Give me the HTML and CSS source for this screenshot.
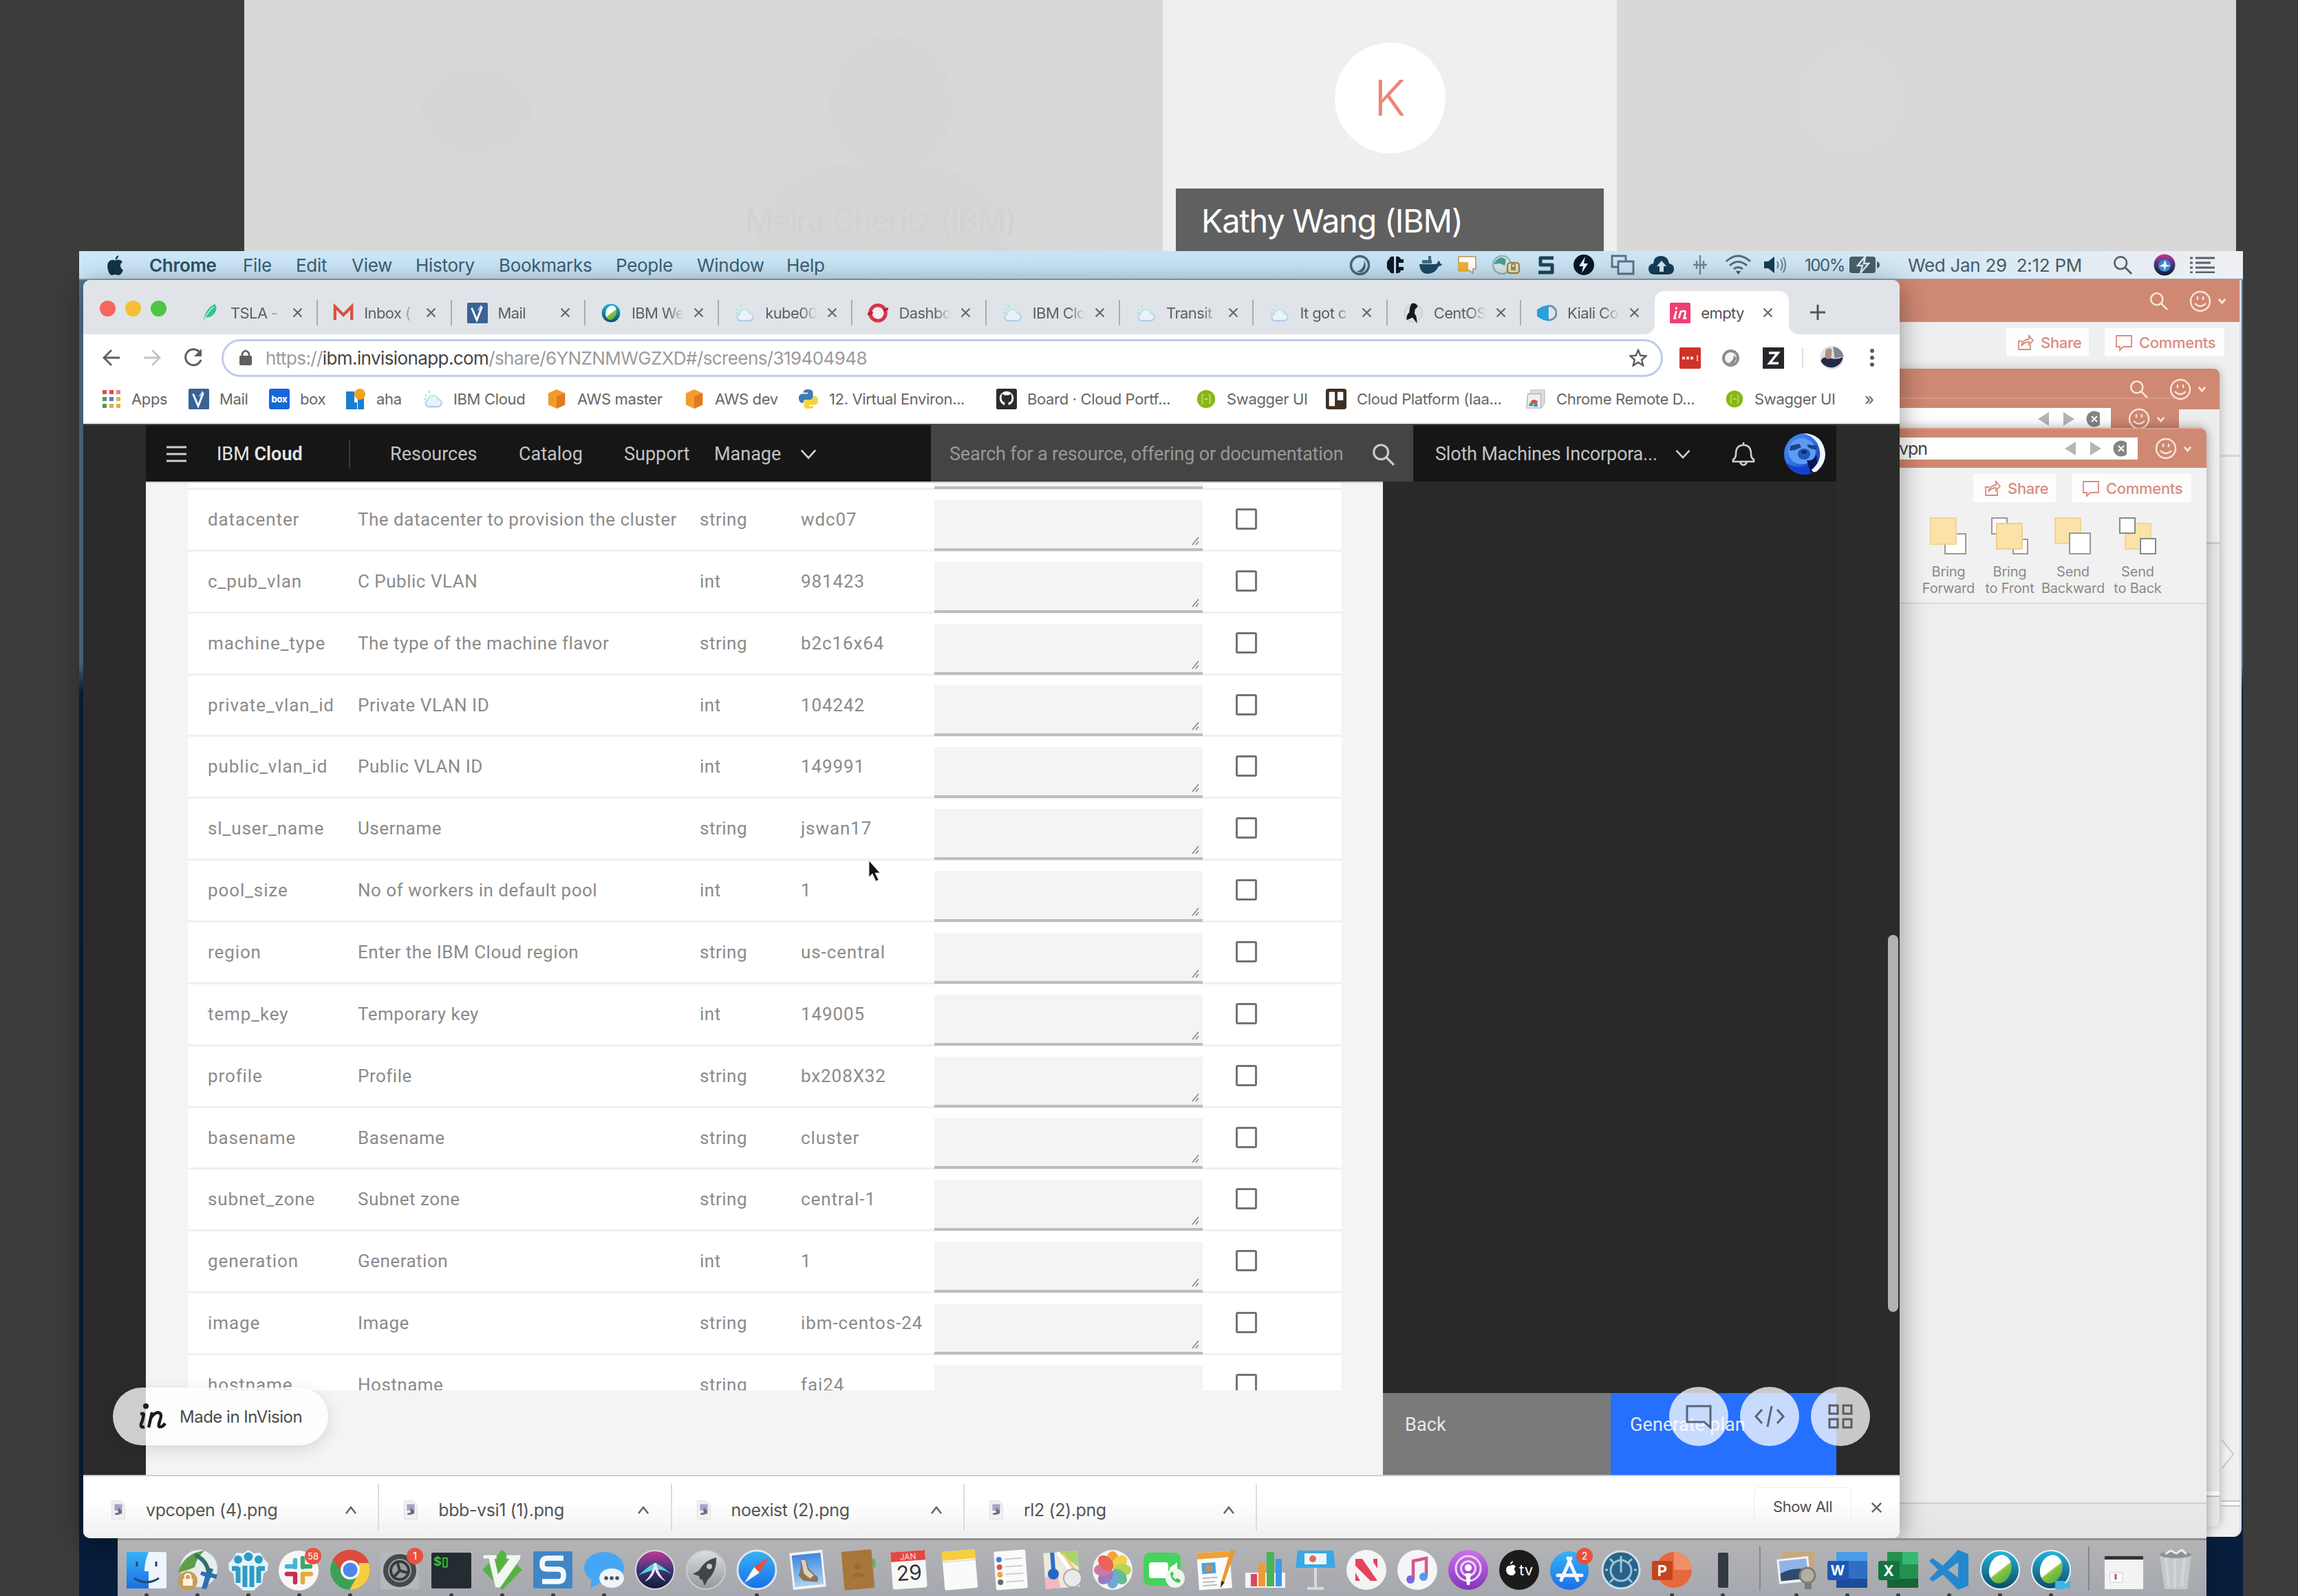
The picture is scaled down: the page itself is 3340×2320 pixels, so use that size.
FILE: index.html
```html
<!DOCTYPE html>
<html lang="en">
<head>
<meta charset="utf-8">
<title>Shared screen</title>
<link rel="stylesheet" href="styles.css">
</head>
<body>
<svg width="0" height="0" class="defs">
  <defs>
    <linearGradient id="gBlue" x1="0" y1="0" x2="0" y2="1"><stop offset="0" stop-color="#37b2f5"/><stop offset="1" stop-color="#1b6fe8"/></linearGradient>
    <linearGradient id="gSilver" x1="0" y1="0" x2="0" y2="1"><stop offset="0" stop-color="#dcdee0"/><stop offset="1" stop-color="#94979b"/></linearGradient>
    <linearGradient id="gCloud" x1="0" y1="0" x2="0" y2="1"><stop offset="0" stop-color="#bfeadf"/><stop offset="1" stop-color="#b2cdf3"/></linearGradient>
    <linearGradient id="gTeal" x1="0" y1="0" x2="0" y2="1"><stop offset="0" stop-color="#25b6dc"/><stop offset="1" stop-color="#0c4a66"/></linearGradient>
    <linearGradient id="gPod" x1="0" y1="0" x2="0" y2="1"><stop offset="0" stop-color="#cb72ea"/><stop offset="1" stop-color="#8431bd"/></linearGradient>
    <linearGradient id="gSiri" x1="0" y1="0" x2="0" y2="1"><stop offset="0" stop-color="#c23b93"/><stop offset=".5" stop-color="#3f3577"/><stop offset="1" stop-color="#101a33"/></linearGradient>
    <linearGradient id="gSky" x1="0" y1="0" x2="0" y2="1"><stop offset="0" stop-color="#3f86e0"/><stop offset="1" stop-color="#a9d3f2"/></linearGradient>
    <linearGradient id="gGreen" x1="0" y1="0" x2="1" y2="1"><stop offset="0" stop-color="#fff"/><stop offset=".5" stop-color="#fff"/><stop offset=".55" stop-color="#8cc63f"/><stop offset="1" stop-color="#3fa34d"/></linearGradient>
    <linearGradient id="gSloth" x1="0" y1="0" x2="1" y2="1"><stop offset="0" stop-color="#4f8ff5"/><stop offset=".5" stop-color="#2c6be6"/><stop offset="1" stop-color="#0a1c78"/></linearGradient>
  </defs>
  <symbol id="x" viewBox="0 0 20 20"><path d="M3 3l14 14M17 3L3 17" fill="none" stroke="currentColor" stroke-width="2.6"/></symbol>
  <symbol id="chev" viewBox="0 0 30 30"><path d="M4 9l11 12L26 9" fill="none" stroke="currentColor" stroke-width="3"/></symbol>
  <symbol id="chevb" viewBox="0 0 14 14"><path d="M2 4l5 6 5-6" fill="none" stroke="currentColor" stroke-width="3"/></symbol>
  <symbol id="mag" viewBox="0 0 30 30"><circle cx="12" cy="12" r="9.5" fill="none" stroke="currentColor" stroke-width="2.8"/><path d="M19 19l10 10" stroke="currentColor" stroke-width="3"/></symbol>
  <symbol id="smile" viewBox="0 0 32 32"><circle cx="16" cy="16" r="14" fill="none" stroke="currentColor" stroke-width="2.4"/><path d="M12 9v5M20 9v5M8 19q8 8 16 0" fill="none" stroke="currentColor" stroke-width="2.4"/></symbol>
  <symbol id="cloud" viewBox="0 0 32 32"><path d="M9 28h14a6 6 0 0 0 1-12 8 8 0 0 0-15.500 1.500A5.500 5.500 0 0 0 9 28z" fill="#e9f2fa" stroke="url(#gCloud)" stroke-width="2.600"/><path d="M4 9l3 3M10 3l1 4M2 16h4" stroke="#a5e6dd" stroke-width="2"/></symbol>
  <symbol id="vmail" viewBox="0 0 32 32"><rect width="32" height="32" rx="2" fill="#3b6295"/><path d="M7 8l8 19L23 6" fill="none" stroke="#fff" stroke-width="3"/><path d="M17 12l5-8" stroke="#bcd" stroke-width="2"/></symbol>
  <symbol id="webex" viewBox="0 0 60 60"><circle cx="30" cy="30" r="28" fill="url(#gTeal)" stroke="#e7f4f8" stroke-width="2"/><ellipse cx="30" cy="29" rx="16" ry="21" fill="url(#gGreen)" transform="rotate(15 30 30)"/></symbol>
  <symbol id="cube" viewBox="0 0 32 32"><path d="M16 1l13 6v18l-13 6-13-6V7z" fill="#f59a2c"/><path d="M16 12l13-5v18l-13 6z" fill="#e07a1d"/></symbol>
  <symbol id="swag" viewBox="0 0 32 32"><circle cx="16" cy="16" r="14" fill="#86b812"/><path d="M12 9q-3 0-2 7-1 7 2 7M20 9q3 0 2 7 1 7-2 7M13 16h6" fill="none" stroke="#bcd96c" stroke-width="2"/></symbol>
  <symbol id="share" viewBox="0 0 26 26"><path d="M8 11H3v12h17v-7M7 18q1-9 11-10V3l6 7-6 6v-4q-7 0-11 6z" fill="none" stroke="currentColor" stroke-width="1.800"/></symbol>
  <symbol id="note" viewBox="0 0 26 26"><path d="M2 3h22v16H12l-5 5v-5H2z" fill="none" stroke="currentColor" stroke-width="1.800"/></symbol>
  <symbol id="grip" viewBox="0 0 14 14"><path d="M3 13L12 2M8 13l4-5" stroke="#8c8c8c" stroke-width="1.800"/></symbol>
  <symbol id="png" viewBox="0 0 22 30"><path d="M1 1h14l6 7v21H1z" fill="#f1f1f3" stroke="#d9d9dc"/><rect x="5" y="6" width="12" height="10" fill="#a3a4c8"/><path d="M6 21h5M12 12v10M15 15v6" stroke="#6a6c80" stroke-width="3"/></symbol>
  <symbol id="up" viewBox="0 0 18 14"><path d="M2 12l7-9 7 9" fill="none" stroke="#666" stroke-width="2.600"/></symbol>
</svg>
<main class="stage">

  <section class="tiles">
    <div class="tile tile-a"><span class="ghost ghost-1"></span><span class="ghost ghost-2"></span><span class="ghost ghost-4"></span><div class="ghost-name">Meira Cheritz (IBM)</div></div>
    <div class="tile tile-k"><div class="avatar">K</div><div class="name">Kathy Wang (IBM)</div></div>
    <div class="tile tile-b"><span class="ghost ghost-3"></span></div>
  </section>

  <section class="wall"></section>

  <header class="menubar">
    <nav class="menus">
      <svg viewBox="0 0 26 32" width="25" height="31"><path d="M18 1q0 5-5 7Q13 3 18 1zM13 9q3-2 6-1 3 0 5 3-4 3-3 7 1 4 4 5-3 8-7 8l-5-1-5 1Q4 31 2 23 0 15 3 11q4-5 10-2z" fill="#123449"/></svg>
      <b>Chrome</b><span>File</span><span>Edit</span><span>View</span><span>History</span><span>Bookmarks</span><span>People</span><span>Window</span><span>Help</span>
    </nav>
    <div class="status">
      <svg width="31" height="31" viewBox="0 0 31 31"><circle cx="15.500" cy="15.500" r="13" fill="none" stroke="#476878" stroke-width="3.500"/><path d="M10 25q12-3 12-17 5 13-4 18z" fill="#476878"/></svg>
      <svg width="25" height="28" viewBox="0 0 25 28"><path d="M11 2v24Q5 27 4 22 0 20 1 14 0 8 4 6 5 1 11 2zM14 2q6-1 7 4h4v5h-7v6h7v5h-4q-1 5-7 4z" fill="#0c1a26"/></svg>
      <svg width="34" height="30" viewBox="0 0 34 30"><path d="M1 14h24q3-1 3-5 4 1 3 4l3 1q-1 3-5 3-5 11-16 11Q2 28 1 14z" fill="#1d4a63"/><path d="M5 8h14v5H5zM14 2h4v6h-4z" fill="#3f6d84"/></svg>
      <svg width="30" height="30" viewBox="0 0 30 30"><path d="M2 3h25v18h-4v6l-6-4H2z" fill="#fff" stroke="#c9a77a" stroke-width="2"/><path d="M2 11h14v14H2z" fill="#efb634"/></svg>
      <svg width="43" height="31" viewBox="0 0 43 31"><circle cx="15" cy="15" r="13" fill="#d4e9e6" stroke="#8fb9b9" stroke-width="2.500"/><path d="M4 12q9-13 17-4l-2 8-7-3-8 1z" fill="#4f9b94"/><rect x="23" y="12" width="17" height="15" rx="4" fill="#ece3c0" stroke="#a08c56" stroke-width="2.500"/><path d="M28 18h7v5h-7z" fill="#a08c56"/><path d="M29 18v-3q3-3 5 0v3" fill="none" stroke="#a08c56" stroke-width="2"/></svg>
      <svg width="25" height="28" viewBox="0 0 25 28"><path d="M23 4H4v10h17v11H1" fill="none" stroke="#1d4658" stroke-width="5" stroke-linejoin="round"/></svg>
      <svg width="32" height="32" viewBox="0 0 32 32"><circle cx="16" cy="16" r="15" fill="#08172b"/><path d="M18 4L9 18h6l-2 10 9-14h-6z" fill="#eef7fc"/></svg>
      <svg width="35" height="30" viewBox="0 0 35 30"><path d="M10 18H2V2h20v7M11 10h22v18H11z" fill="none" stroke="#537487" stroke-width="2.800"/></svg>
      <svg width="39" height="29" viewBox="0 0 39 29"><path d="M9 28q-8-1-8-8t7-8Q9 1 19 1t12 11q7 1 7 8t-8 8z" fill="#163f57"/><path d="M20 8l7 8h-4v8h-6v-8h-4z" fill="#cfe9f7"/></svg>
      <svg width="22" height="30" viewBox="0 0 22 30"><path d="M11 1v28M6 9v12M16 9v12M1 15h20" stroke="#6c8796" stroke-width="2.400"/></svg>
      <svg width="39" height="30" viewBox="0 0 39 30"><path d="M2 10Q19-6 37 10M7 16q12-11 25 0M13 21q6-5 13 0" fill="none" stroke="#4f7080" stroke-width="3"/><path d="M16 24h7l-3.500 5z" fill="#35566a"/></svg>
      <svg width="34" height="26" viewBox="0 0 34 26"><path d="M1 8h6l9-7v24l-9-7H1z" fill="#173d52"/><path d="M20 8q3 5 0 10M25 5q5 8 0 16M29 2q6 11 0 22" fill="none" stroke="#6c8b9a" stroke-width="2.200"/></svg>
      <span class="pct">100%</span>
      <svg width="45" height="26" viewBox="0 0 45 26"><rect x="1" y="1" width="38" height="24" rx="4" fill="#47606c"/><path d="M41 8v10q4-1 4-5t-4-5z" fill="#47606c"/><path d="M24 1L13 14h7l-3 11 12-14h-7z" fill="#47606c" stroke="#d8ebf4" stroke-width="2.500"/></svg>
      <span class="clock">Wed Jan 29&nbsp; 2:12 PM</span>
      <svg class="grey" width="28" height="28"><use href="#mag"/></svg>
      <svg width="32" height="32" viewBox="0 0 32 32"><circle cx="16" cy="16" r="15.500" fill="url(#gSiri)"/><circle cx="16" cy="17" r="9" fill="#3b86cf"/><path d="M17 9l2 7 6 1-7 2-2 6-1-6-7-1 6-3z" fill="#e8f6fb"/></svg>
      <svg width="36" height="24" viewBox="0 0 36 24"><path d="M0 2h4M0 9h4M0 16h4M0 23h4M8 2h28M8 9h22M8 16h28M8 23h28" stroke="#54606a" stroke-width="3"/></svg>
    </div>
  </header>

  <section class="ppt ppt-1">
    <div class="ppt-bar"><svg width="27" height="27"><use href="#mag"/></svg><svg width="32" height="32"><use href="#smile"/></svg><svg width="13" height="13"><use href="#chevb"/></svg></div>
    <div class="ppt-tabs"><span class="pill"><svg width="26" height="26"><use href="#share"/></svg>Share</span><span class="pill pill-c"><svg width="26" height="26"><use href="#note"/></svg>Comments</span></div>
    <div class="ppt-edge"></div><div class="ppt-foot"></div>
    <svg class="peek" width="20" height="44" viewBox="0 0 20 44"><path d="M1 1l17 21L1 43" fill="#f3f3f3" stroke="#ccc" stroke-width="2"/></svg>
  </section>
  <section class="ppt ppt-2">
    <div class="ppt-bar"><svg width="27" height="27"><use href="#mag"/></svg><svg width="32" height="32"><use href="#smile"/></svg><svg width="13" height="13"><use href="#chevb"/></svg></div>
    <div class="ppt-edge"></div><div class="ppt-foot"></div>
  </section>
  <section class="ppt ppt-3">
    <div class="ppt-bar"><div class="find"><svg width="90" height="24" viewBox="0 0 90 24"><path d="M16 2v20L0 12zM37 2v20l16-10z" fill="#b5b5b5"/><circle cx="82" cy="12" r="11.500" fill="#858585"/><path d="M78 8l8 8M86 8l-8 8" stroke="#fff" stroke-width="2"/></svg></div><svg width="32" height="32"><use href="#smile"/></svg><svg width="13" height="13"><use href="#chevb"/></svg></div>
  </section>
  <section class="ppt ppt-4">
    <div class="ppt-bar"><div class="find"><span>vpn</span><svg width="90" height="24" viewBox="0 0 90 24"><path d="M16 2v20L0 12zM37 2v20l16-10z" fill="#b5b5b5"/><circle cx="82" cy="12" r="11.500" fill="#858585"/><path d="M78 8l8 8M86 8l-8 8" stroke="#fff" stroke-width="2"/></svg></div><svg width="32" height="32"><use href="#smile"/></svg><svg width="13" height="13"><use href="#chevb"/></svg></div>
    <div class="ppt-tabs"><span class="pill"><svg width="26" height="26"><use href="#share"/></svg>Share</span><span class="pill pill-c"><svg width="26" height="26"><use href="#note"/></svg>Comments</span></div>
    <div class="arrange">
      <div><svg width="54" height="56" viewBox="0 0 54 56"><path d="M22 24h30v29H22z" fill="#fff" stroke="#999" stroke-width="2"/><path d="M1 1h37v38H1z" fill="#fae2a8" stroke="#f0d49a" stroke-width="2"/></svg>Bring<br>Forward</div>
      <div><svg width="54" height="56" viewBox="0 0 54 56"><path d="M1 1h22v23H1zM32 32h21v21H32z" fill="#fff" stroke="#999" stroke-width="2"/><path d="M8 9h37v37H8z" fill="#fae2a8" stroke="#f0cf8c" stroke-width="2"/></svg>Bring<br>to Front</div>
      <div><svg width="54" height="56" viewBox="0 0 54 56"><path d="M1 1h37v37H1z" fill="#fae2a8" stroke="#f0d49a" stroke-width="2"/><path d="M22 23h30v30H22z" fill="#fff" stroke="#999" stroke-width="2"/></svg>Send<br>Backward</div>
      <div><svg width="54" height="56" viewBox="0 0 54 56"><path d="M9 9h37v37H9z" fill="#fae2a8" stroke="#f0d49a" stroke-width="2"/><path d="M1 1h22v22H1zM31 31h22v22H31z" fill="#fff" stroke="#888" stroke-width="2"/></svg>Send<br>to Back</div>
    </div>
    <div class="canvas"></div>
    <div class="ppt-bottom"></div>
  </section>

  <section class="chrome">
    <div class="tabs">
      <div class="lights"><i class="r"></i><i class="y"></i><i class="g"></i></div>
      <div class="tab"><svg width="30" height="32" viewBox="0 0 32 32"><path d="M5 31Q9 8 24 2q5 8-2 16-5 5-12 5z" fill="#2fc48e"/><path d="M5 31Q12 14 22 6" stroke="#bfeedd" stroke-width="1.500" fill="none"/></svg><span>TSLA -</span><svg class="cl" width="17" height="17"><use href="#x"/></svg></div>
      <div class="tab"><svg width="30" height="32" viewBox="0 0 32 32"><path d="M3 27V6l13 13L29 6v21" fill="none" stroke="#d8503f" stroke-width="4.500"/></svg><span>Inbox (</span><svg class="cl" width="17" height="17"><use href="#x"/></svg></div>
      <div class="tab"><svg width="30" height="32"><use href="#vmail"/></svg><span>Mail</span><svg class="cl" width="17" height="17"><use href="#x"/></svg></div>
      <div class="tab"><svg width="30" height="32"><use href="#webex"/></svg><span>IBM We</span><svg class="cl" width="17" height="17"><use href="#x"/></svg></div>
      <div class="tab"><svg width="30" height="32"><use href="#cloud"/></svg><span>kube00</span><svg class="cl" width="17" height="17"><use href="#x"/></svg></div>
      <div class="tab"><svg width="30" height="32" viewBox="0 0 32 32"><circle cx="16" cy="16" r="12" fill="#f8eef0" stroke="#d63447" stroke-width="5.500"/><path d="M0 18l8-3M24 12l8-3" stroke="#b92335" stroke-width="4"/></svg><span>Dashbo</span><svg class="cl" width="17" height="17"><use href="#x"/></svg></div>
      <div class="tab"><svg width="30" height="32"><use href="#cloud"/></svg><span>IBM Clo</span><svg class="cl" width="17" height="17"><use href="#x"/></svg></div>
      <div class="tab"><svg width="30" height="32"><use href="#cloud"/></svg><span>Transit</span><svg class="cl" width="17" height="17"><use href="#x"/></svg></div>
      <div class="tab"><svg width="30" height="32"><use href="#cloud"/></svg><span>It got c</span><svg class="cl" width="17" height="17"><use href="#x"/></svg></div>
      <div class="tab"><svg width="30" height="32" viewBox="0 0 32 32"><circle cx="16" cy="16" r="14" fill="#dde0e2" stroke="#b8bcbf"/><path d="M14 1q7-1 9 5l-4 4-1 6 3 6 1 10-7-9-9 4q-1-8 4-12 0-9 4-14z" fill="#16181a"/></svg><span>CentOS</span><svg class="cl" width="17" height="17"><use href="#x"/></svg></div>
      <div class="tab"><svg width="30" height="32" viewBox="0 0 32 32"><circle cx="20" cy="16" r="11" fill="none" stroke="#6d90a8" stroke-width="3"/><path d="M1 11q9-7 18-7v24q-9 0-18-7z" fill="#2a9fdd"/></svg><span>Kiali Co</span><svg class="cl" width="17" height="17"><use href="#x"/></svg></div>
      <div class="tab active"><svg width="30" height="32" viewBox="0 0 32 32"><rect width="32" height="32" rx="2" fill="#ee3f70"/><path d="M10 7v3M10 13l-3 11h3M14 24l3-10q8-3 7 2l-2 8h4" fill="none" stroke="#fff" stroke-width="3"/></svg><span>empty</span><svg class="cl" width="17" height="17"><use href="#x"/></svg></div>
      <svg class="plus" width="22" height="22" viewBox="0 0 22 22"><path d="M11 0v22M0 11h22" stroke="#555" stroke-width="3"/></svg>
    </div>
    <div class="toolbar">
      <div class="navs">
        <svg width="26" height="26" viewBox="0 0 26 26"><path d="M25 13H3M13 2L2 13l11 11" fill="none" stroke="#5e5e5e" stroke-width="2.800"/></svg>
        <svg width="26" height="26" viewBox="0 0 26 26"><path d="M1 13h22M13 2l11 11-11 11" fill="none" stroke="#c4c4c4" stroke-width="2.800"/></svg>
        <svg width="28" height="28" viewBox="0 0 28 28"><path d="M23 6A11.500 11.500 0 1 0 25 17" fill="none" stroke="#5e5e5e" stroke-width="3"/><path d="M26 1v11H15z" fill="#5e5e5e"/></svg>
      </div>
      <div class="omni">
        <svg width="18" height="24" viewBox="0 0 18 24"><rect y="9" width="18" height="14" rx="2" fill="#5f5f5f"/><path d="M4 10V6q5-8 10 0v4" fill="none" stroke="#5f5f5f" stroke-width="2.600"/></svg>
        <p class="url">https://<b>ibm.invisionapp.com</b>/share/6YNZNMWGZXD#/screens/319404948</p>
        <svg width="26" height="26" viewBox="0 0 28 28"><path d="M14 2l3.500 8.500 9 .7-7 6 2.300 9L14 21.200 6.200 26.200l2.300-9-7-6 9-.7z" fill="none" stroke="#5c5c5c" stroke-width="2.600"/></svg>
      </div>
      <div class="exts">
        <svg width="31" height="31" viewBox="0 0 31 31"><rect width="31" height="31" rx="2" fill="#cf3328"/><path d="M4 15.500h4M10 15.500h4M16 15.500h4" stroke="#f7d9d6" stroke-width="4"/><path d="M26 11v9" stroke="#f0b5b0" stroke-width="2"/></svg>
        <svg width="25" height="25" viewBox="0 0 25 25"><circle cx="12.500" cy="12.500" r="10.500" fill="#f4f4f4" stroke="#8c8c8c" stroke-width="4"/><path d="M8 20q9-2 9-12l4 5-5 8z" fill="#888"/></svg>
        <svg width="31" height="31" viewBox="0 0 31 31"><rect width="31" height="31" fill="#26272b"/><path d="M9 8h13L10 23h13" fill="none" stroke="#fff" stroke-width="3.600"/></svg>
        <i></i>
        <svg width="37" height="36" viewBox="0 0 36 36"><circle cx="18" cy="18" r="17" fill="#dcdfe4"/><path d="M20 2q13 3 15 14l-13 3z" fill="#7f868f"/><path d="M2 23q2-7 11-5 12 4 21-1a17 17 0 0 1-32 6z" fill="#232a48"/><path d="M9 7q4-5 9-1l-1 13q-7 2-9-2z" fill="#b48f7e"/></svg>
        <svg width="6" height="26" viewBox="0 0 6 26"><circle cx="3" cy="3" r="3" fill="#5c5c5c"/><circle cx="3" cy="13" r="3" fill="#5c5c5c"/><circle cx="3" cy="23" r="3" fill="#5c5c5c"/></svg>
      </div>
    </div>
    <div class="marks">
      <div><svg width="28" height="28" viewBox="0 0 28 28"><path d="M1 4h6M11 4h6" stroke="#dd4f43" stroke-width="6"/><path d="M21 4h6" stroke="#d98b80" stroke-width="6"/><path d="M1 14h6" stroke="#4f9a57" stroke-width="6"/><path d="M11 14h6" stroke="#4a7fd6" stroke-width="6"/><path d="M21 14h6M21 24h6" stroke="#e3b341" stroke-width="6"/><path d="M1 24h6" stroke="#4f9a57" stroke-width="6"/><path d="M11 24h6" stroke="#dcae4a" stroke-width="6"/></svg>Apps</div>
      <div><svg width="30" height="30"><use href="#vmail"/></svg>Mail</div>
      <div><svg width="30" height="30" viewBox="0 0 30 30"><rect width="30" height="30" rx="3" fill="#1667d8"/><text x="15" y="20" font-size="13" font-weight="800" text-anchor="middle" fill="#fff">box</text></svg>box</div>
      <div><svg width="30" height="30" viewBox="0 0 30 30"><path d="M1 4h12v16h4v10H1zM18 14h9v16h-9z" fill="#1c7ed0"/><circle cx="21" cy="8" r="8" fill="#f2a31b"/></svg>aha</div>
      <div><svg width="30" height="30"><use href="#cloud"/></svg>IBM Cloud</div>
      <div><svg width="30" height="30"><use href="#cube"/></svg>AWS master</div>
      <div><svg width="30" height="30"><use href="#cube"/></svg>AWS dev</div>
      <div><svg width="30" height="30" viewBox="0 0 32 32"><path d="M15 1q8 0 8 5v7q0 4-5 4h-6q-4 0-4 5H5q-4-2-4-8 0-5 5-6h9V6H8Q8 1 15 1z" fill="#3f7cb0"/><path d="M17 31q-8 0-8-5v-5q0-4 5-4h6q4 0 4-6h3q4 2 4 8 0 5-5 6h-9v2h7q0 4-7 4z" fill="#f5d340"/></svg>12. Virtual Environ...</div>
      <div><svg width="30" height="30" viewBox="0 0 32 32"><rect width="32" height="32" rx="3" fill="#2c2c2e"/><circle cx="16" cy="15" r="11" fill="#fff"/><path d="M9 8l4 2h6l4-2q3 13-4 13v8h-6v-8Q6 20 9 8z" fill="#2c2c2e"/></svg>Board · Cloud Portf...</div>
      <div><svg width="30" height="30"><use href="#swag"/></svg>Swagger UI</div>
      <div><svg width="30" height="30" viewBox="0 0 32 32"><rect width="32" height="32" rx="4" fill="#3f3024"/><rect x="5" y="5" width="9" height="22" fill="#fff"/><rect x="18" y="5" width="9" height="13" fill="#fff"/></svg>Cloud Platform (Iaa...</div>
      <div><svg width="30" height="30" viewBox="0 0 32 32"><path d="M8 2h22v20l-4 7H8z" fill="#ddd" stroke="#b5b5b5"/><path d="M4 8h20v22H2z" fill="#f0f0f2" stroke="#b5b5b5" stroke-width="1.500"/><path d="M5 27q1-7 7-7v7z" fill="#4a9c5c"/><path d="M8 20q5-6 12 0l-6 4z" fill="#d84a3e"/><path d="M13 22h6v6h-6z" fill="#5a86d8"/></svg>Chrome Remote D...</div>
      <div><svg width="28" height="30"><use href="#swag"/></svg>Swagger UI</div>
      <div class="more">»</div>
    </div>
    <div class="page">
      <div class="cloudbar">
        <svg width="29" height="26" viewBox="0 0 29 26"><path d="M0 3h29M0 13h29M0 23h29" stroke="#d0d0d0" stroke-width="3"/></svg>
        <span class="brand">IBM <b>Cloud</b></span><i></i>
        <span>Resources</span><span>Catalog</span><span>Support</span><span>Manage</span>
        <svg class="lt" width="28" height="28"><use href="#chev"/></svg>
        <div class="search"><span>Search for a resource, offering or documentation</span><svg width="33" height="33"><use href="#mag"/></svg></div>
        <span class="acct">Sloth Machines Incorpora...</span>
        <svg class="lt" width="26" height="26"><use href="#chev"/></svg>
        <svg width="34" height="36" viewBox="0 0 34 36"><path d="M2 29v-3q4-2 4-8 0-13 11-13t11 13q0 6 4 8v3zM17 5V1M12 30q5 8 10 0" fill="none" stroke="#d0d0d0" stroke-width="2.600"/></svg>
        <svg width="62" height="62" viewBox="0 0 62 62"><circle cx="31" cy="31" r="30" fill="url(#gSloth)"/><path d="M4 44Q14 60 34 61l6-14Q20 54 4 44z" fill="#1540cf"/><ellipse cx="27" cy="27" rx="20" ry="19" fill="#5c9bf6"/><path d="M10 19l13-3 3 5-9 4-8 1zM35 17l14 2-1 6-9-2-4-3z" fill="#1c4585"/><ellipse cx="30" cy="31" rx="9" ry="8" fill="#1f56b4"/><ellipse cx="30" cy="28" rx="4" ry="2.500" fill="#0c2a66"/><path d="M34 40q10 2 14-8l2 20-10 7z" fill="#091556"/><path d="M28 1q30 0 33 30 0 14-12 25-6 3-8-2 14-12 12-27Q50 6 28 1z" fill="#f2f6fb"/></svg>
      </div>
      <div class="work">
        <div class="form">
          <div class="rows">
            <div class="row first"><span></span><span></span><span></span><span></span><div class="area"><svg width="14" height="14"><use href="#grip"/></svg></div></div>
            <div class="row"><span>datacenter</span><span>The datacenter to provision the cluster</span><span>string</span><span>wdc07</span><div class="area"><svg width="14" height="14"><use href="#grip"/></svg></div><i></i></div>
            <div class="row"><span>c_pub_vlan</span><span>C Public VLAN</span><span>int</span><span>981423</span><div class="area"><svg width="14" height="14"><use href="#grip"/></svg></div><i></i></div>
            <div class="row"><span>machine_type</span><span>The type of the machine flavor</span><span>string</span><span>b2c16x64</span><div class="area"><svg width="14" height="14"><use href="#grip"/></svg></div><i></i></div>
            <div class="row"><span>private_vlan_id</span><span>Private VLAN ID</span><span>int</span><span>104242</span><div class="area"><svg width="14" height="14"><use href="#grip"/></svg></div><i></i></div>
            <div class="row"><span>public_vlan_id</span><span>Public VLAN ID</span><span>int</span><span>149991</span><div class="area"><svg width="14" height="14"><use href="#grip"/></svg></div><i></i></div>
            <div class="row"><span>sl_user_name</span><span>Username</span><span>string</span><span>jswan17</span><div class="area"><svg width="14" height="14"><use href="#grip"/></svg></div><i></i></div>
            <div class="row"><span>pool_size</span><span>No of workers in default pool</span><span>int</span><span>1</span><div class="area"><svg width="14" height="14"><use href="#grip"/></svg></div><i></i></div>
            <div class="row"><span>region</span><span>Enter the IBM Cloud region</span><span>string</span><span>us-central</span><div class="area"><svg width="14" height="14"><use href="#grip"/></svg></div><i></i></div>
            <div class="row"><span>temp_key</span><span>Temporary key</span><span>int</span><span>149005</span><div class="area"><svg width="14" height="14"><use href="#grip"/></svg></div><i></i></div>
            <div class="row"><span>profile</span><span>Profile</span><span>string</span><span>bx208X32</span><div class="area"><svg width="14" height="14"><use href="#grip"/></svg></div><i></i></div>
            <div class="row"><span>basename</span><span>Basename</span><span>string</span><span>cluster</span><div class="area"><svg width="14" height="14"><use href="#grip"/></svg></div><i></i></div>
            <div class="row"><span>subnet_zone</span><span>Subnet zone</span><span>string</span><span>central-1</span><div class="area"><svg width="14" height="14"><use href="#grip"/></svg></div><i></i></div>
            <div class="row"><span>generation</span><span>Generation</span><span>int</span><span>1</span><div class="area"><svg width="14" height="14"><use href="#grip"/></svg></div><i></i></div>
            <div class="row"><span>image</span><span>Image</span><span>string</span><span>ibm-centos-24</span><div class="area"><svg width="14" height="14"><use href="#grip"/></svg></div><i></i></div>
            <div class="row"><span>hostname</span><span>Hostname</span><span>string</span><span>fai24</span><div class="area"></div><i></i></div>
          </div>
        </div>
        <div class="side"><div class="btn back">Back</div><div class="btn gen">Generate plan</div></div>
      </div>
      <div class="scroll"></div>
      <div class="made"><svg width="46" height="40" viewBox="0 0 46 40"><path d="M8 15q-1 10-4 16-1 6 5 4M3 16h6M20 14l-5 22M18 22q8-10 13-7 4 2 0 12-3 9 1 8 4 0 7-5" fill="none" stroke="#1c1c1c" stroke-width="4.500"/><circle cx="11" cy="5" r="4" fill="#1c1c1c"/></svg>Made in InVision</div>
      <div class="fabs">
        <span><svg width="38" height="38" viewBox="0 0 38 38"><path d="M2 4h34v31l-9-8H2z" fill="none" stroke="#5a6478" stroke-width="3"/></svg></span>
        <span><svg width="44" height="34" viewBox="0 0 44 34"><path d="M11 7L2 17l9 10M33 7l9 10-9 10M25 2l-6 30" fill="none" stroke="#5a6478" stroke-width="3"/></svg></span>
        <span><svg width="36" height="36" viewBox="0 0 36 36"><path d="M2 2h12v12H2zM22 2h12v12H22zM2 22h12v12H2zM22 22h12v12H22z" fill="none" stroke="#5d5d5d" stroke-width="3"/></svg></span>
      </div>
    </div>
    <div class="downloads">
      <div class="dl"><svg width="22" height="28"><use href="#png"/></svg><span>vpcopen (4).png</span><svg width="18" height="14"><use href="#up"/></svg></div>
      <div class="dl"><svg width="22" height="28"><use href="#png"/></svg><span>bbb-vsi1 (1).png</span><svg width="18" height="14"><use href="#up"/></svg></div>
      <div class="dl"><svg width="22" height="28"><use href="#png"/></svg><span>noexist (2).png</span><svg width="18" height="14"><use href="#up"/></svg></div>
      <div class="dl"><svg width="22" height="28"><use href="#png"/></svg><span>rl2 (2).png</span><svg width="18" height="14"><use href="#up"/></svg></div>
      <span class="showall">Show All</span><svg class="cl" width="19" height="19"><use href="#x"/></svg>
    </div>
  </section>

  <svg class="cursor" width="18" height="32" viewBox="0 0 18 32"><path d="M1 1v24l5-5 5 11 4-2-5-10h7z" fill="#111" stroke="#ddd" stroke-width="1"/></svg>

  <footer class="dock">
    <div class="apps">
      <div class="on"><svg viewBox="0 0 60 60"><rect x="1" y="4" width="58" height="53" rx="3" fill="#eef4fb"/><path d="M1 4h32q-6 14-6 28h6v25H1z" fill="url(#gBlue)"/><path d="M16 18v7M44 18v7M12 42q18 12 36 0" stroke="#23476a" stroke-width="3" fill="none"/></svg></div>
      <div class="on"><svg viewBox="0 0 60 60"><circle cx="32" cy="28" r="27" fill="#e7ecee"/><path d="M2 34Q10 6 40 2 28 14 26 26q-8 4-24 8z" fill="#5c9f47"/><path d="M36 32l8 2 3-7 6 2-2 6 8 2-2 6-8-2-6 17-7-1 5-17-7-3z" fill="#2f6eb5"/><path d="M26 8q18 8 20 26" fill="none" stroke="#30736a" stroke-width="6"/><circle cx="16" cy="46" r="14" fill="#c99c5b"/><rect x="9" y="43" width="14" height="10" fill="#fff4df"/><path d="M12 43v-5q4-4 8 0v5" fill="none" stroke="#fff4df" stroke-width="2.500"/></svg></div>
      <div class="on"><svg viewBox="0 0 60 60"><path d="M30 1l8 5 9-1 5 8 7 8-1 10-6 4-2 15-6 4-6 6H22l-6-6-6-4-2-15-6-4-1-10 7-8 5-8 9 1z" fill="#e6f4fa"/><path d="M15 26v23M25 24v31M35 24v31M45 26v23M6 28h10M44 28h10" stroke="#2f9cc6" stroke-width="7"/><circle cx="30" cy="11" r="6.500" fill="#2f9cc6"/><circle cx="15" cy="15" r="6" fill="#2f9cc6"/><circle cx="45" cy="15" r="6" fill="#2f9cc6"/></svg></div>
      <div class="on"><svg viewBox="0 0 60 60"><circle cx="29" cy="31" r="29" fill="#f7f7f7"/><g stroke-width="6.500" stroke-linecap="round"><path d="M24 16v10M12 25h12" stroke="#41b6db"/><path d="M35 13v13M35 25h11" stroke="#3fa66c"/><path d="M24 37v11M12 36h12" stroke="#c92d58"/><path d="M35 37v11M35 36h12" stroke="#e3ac38"/></g><circle cx="50" cy="10" r="12" fill="#e9513f"/><text x="50" y="15" font-size="13" text-anchor="middle" fill="#fff">58</text></svg></div>
      <div class="on"><svg viewBox="0 0 60 60"><circle cx="30" cy="30" r="29" fill="#3ba158"/><path d="M5 15a29 29 0 0 1 50 0L57 22H30L18 34z" fill="#dd4b3c"/><path d="M57 20a29 29 0 0 1-28 39L43 34V20z" fill="#f8cd40"/><circle cx="30" cy="30" r="14" fill="#f4f6f8"/><circle cx="30" cy="30" r="10.500" fill="#4f86ec"/></svg></div>
      <div><svg viewBox="0 0 60 60"><rect x="1" y="4" width="56" height="54" fill="#b5b8ba"/><circle cx="29" cy="31" r="24" fill="#47494c"/><circle cx="29" cy="31" r="17" fill="#9a9da0"/><circle cx="29" cy="31" r="13" fill="none" stroke="#37393b" stroke-width="4"/><path d="M29 31l-4-14M29 31l14 4M29 31l-10 11" stroke="#37393b" stroke-width="4"/><circle cx="51" cy="10" r="12" fill="#e9513f"/><text x="51" y="15" font-size="15" text-anchor="middle" fill="#fff">1</text></svg></div>
      <div class="on"><svg viewBox="0 0 60 60"><rect x="1" y="5" width="58" height="52" rx="2" fill="#232c31"/><text x="4" y="24" font-size="18" font-weight="700" fill="#35c52f">$▯</text></svg></div>
      <div class="on"><svg viewBox="0 0 60 60"><path d="M30 1l29 29-29 29L1 30z" fill="#53b43f"/><path d="M2 8h20v6h-3l5 22L40 14h-4V8h21v5L27 56h-7L10 14H2z" fill="#f2f6f2" stroke="#9ab49a"/></svg></div>
      <div class="on"><svg viewBox="0 0 60 60"><rect x="1" y="3" width="57" height="54" rx="3" fill="#3f86c4"/><path d="M45 13H22q-8 0-8 8v1q0 7 7 7h16q8 0 8 8v2q0 8-8 8H14" fill="none" stroke="#f3f8fc" stroke-width="7.500"/></svg></div>
      <div class="on"><svg viewBox="0 0 60 60"><ellipse cx="30" cy="27" rx="29" ry="23" fill="#45a7f4"/><path d="M12 42l-2 15 14-8z" fill="#45a7f4"/><ellipse cx="41" cy="42" rx="18" ry="14" fill="#edf4fa"/><circle cx="33" cy="42" r="2.800" fill="#456"/><circle cx="41" cy="42" r="2.800" fill="#456"/><circle cx="49" cy="42" r="2.800" fill="#456"/></svg></div>
      <div><svg viewBox="0 0 60 60"><circle cx="30" cy="30" r="28" fill="url(#gSiri)" stroke="#d8d8dc" stroke-width="2"/><path d="M6 38Q26 20 30 20t24 16Q40 28 30 30T6 38z" fill="#55d5dd"/><path d="M29 20q-2 16-14 27 13-5 15-18 3 12 16 18-12-11-14-27z" fill="#f2dff0"/></svg></div>
      <div><svg viewBox="0 0 60 60"><circle cx="30" cy="30" r="28" fill="url(#gSilver)" stroke="#c9cbcd" stroke-width="2"/><path d="M45 12Q28 16 20 31l-9 5 9 3 1 4 4 2 3 8 5-9Q46 32 45 12z" fill="#434548"/><circle cx="35" cy="25" r="4" fill="#c5c7c9"/></svg></div>
      <div class="on"><svg viewBox="0 0 60 60"><circle cx="30" cy="30" r="28" fill="url(#gBlue)" stroke="#dfe5ea" stroke-width="3"/><path d="M48 11L34 34l-8-8z" fill="#ee4c3c"/><path d="M12 49l22-15-8-8z" fill="#f4f6f8"/></svg></div>
      <div><svg viewBox="0 0 60 60"><g transform="rotate(-6 30 30)"><rect x="6" y="3" width="48" height="54" fill="#f2f4f6"/><rect x="9" y="7" width="42" height="46" fill="url(#gSky)"/><path d="M22 12l7 3 3 14 12 14-2 6-20-4-6-8 4-10z" fill="#8b7355"/><path d="M22 14l6 2 2 14 8 9-6 4-8-8z" fill="#d9d2c4"/></g></svg></div>
      <div><svg viewBox="0 0 60 60"><g transform="rotate(-5 30 30)"><rect x="8" y="2" width="44" height="56" rx="2" fill="#a8763a"/><path d="M52 16h4v12h-4z" fill="#5cb85c"/><circle cx="30" cy="25" r="5" fill="#9a6b33"/><path d="M20 40q10-12 20 0z" fill="#9a6b33"/></g></svg></div>
      <div><svg viewBox="0 0 60 60"><g transform="rotate(-4 30 30)"><rect x="5" y="3" width="50" height="54" rx="3" fill="#f7f7f7"/><path d="M5 3h50v14H5z" fill="#e2483f"/><text x="30" y="15" font-size="12" text-anchor="middle" fill="#fbdcda">JAN</text><text x="30" y="45" font-size="30" text-anchor="middle" fill="#333">29</text></g></svg></div>
      <div><svg viewBox="0 0 60 60"><g transform="rotate(-5 30 30)"><rect x="6" y="2" width="48" height="56" rx="2" fill="#fafafa"/><path d="M6 2h48v13H6z" fill="#f5cf3e"/><path d="M6 17h48" stroke="#ccc"/></g></svg></div>
      <div><svg viewBox="0 0 60 60"><g transform="rotate(-4 30 30)"><rect x="7" y="2" width="46" height="56" rx="2" fill="#fafafa"/><path d="M22 14h26M22 25h26M22 36h26M22 47h26" stroke="#d0d0d0" stroke-width="2"/><circle cx="14" cy="14" r="4" fill="#3f7fe0"/><circle cx="14" cy="25" r="4" fill="#df503f"/><circle cx="14" cy="36" r="4" fill="#f0a638"/><circle cx="14" cy="47" r="4" fill="#666"/></g></svg></div>
      <div><svg viewBox="0 0 60 60"><g transform="rotate(-4 30 30)"><rect x="5" y="4" width="50" height="52" fill="#eceadb"/><path d="M28 4h27v24z" fill="#a9d46e"/><path d="M5 40l18-8 4 24H5z" fill="#f0b9c0"/><path d="M18 4v30" stroke="#2d6ed2" stroke-width="6"/><path d="M26 4l24 40" stroke="#fff" stroke-width="5"/><path d="M34 6l20 34" stroke="#f5c85b" stroke-width="3"/></g><circle cx="18" cy="36" r="8" fill="#2865c8"/><circle cx="46" cy="42" r="13" fill="#e8eaec" stroke="#aaa" stroke-width="2"/></svg></div>
      <div><svg viewBox="0 0 60 60"><circle cx="30" cy="30" r="29" fill="#f3f2ef"/><g opacity=".9"><ellipse cx="30" cy="16" rx="9" ry="13" fill="#f39a2e"/><ellipse cx="30" cy="16" rx="9" ry="13" fill="#efce3a" transform="rotate(45 30 30)"/><ellipse cx="30" cy="16" rx="9" ry="13" fill="#b5cf45" transform="rotate(90 30 30)"/><ellipse cx="30" cy="16" rx="9" ry="13" fill="#55b78a" transform="rotate(135 30 30)"/><ellipse cx="30" cy="16" rx="9" ry="13" fill="#609fda" transform="rotate(180 30 30)"/><ellipse cx="30" cy="16" rx="9" ry="13" fill="#8c70bd" transform="rotate(225 30 30)"/><ellipse cx="30" cy="16" rx="9" ry="13" fill="#cf6a9c" transform="rotate(270 30 30)"/><ellipse cx="30" cy="16" rx="9" ry="13" fill="#e85446" transform="rotate(315 30 30)"/></g></svg></div>
      <div><svg viewBox="0 0 60 60"><rect x="1" y="5" width="54" height="48" rx="9" fill="#45d35d"/><rect x="9" y="19" width="28" height="23" rx="4" fill="#fff"/><path d="M39 27l11-8v22l-11-7z" fill="#fff"/><circle cx="47" cy="42" r="14" fill="#eef5ef"/><path d="M40 35q1 12 13 14l2-4-5-3-3 2-4-5 2-3-2-4z" fill="#3cc654"/></svg></div>
      <div><svg viewBox="0 0 60 60"><g transform="rotate(-4 30 30)"><rect x="6" y="4" width="48" height="54" fill="#fafafa"/><path d="M6 4h48v9H6z" fill="#f0a033"/><rect x="12" y="19" width="20" height="16" fill="#4ba3d9"/><circle cx="22" cy="27" r="5" fill="#dc8a4a"/><path d="M12 41h22M12 47h18M12 52h20" stroke="#bbb" stroke-width="2"/></g><path d="M54 0l6 3-16 46-5 6 1-8z" fill="#e89830"/><path d="M40 46l5 2-6 8z" fill="#333"/></svg></div>
      <div><svg viewBox="0 0 60 60"><path d="M1 34h58v22H1z" fill="#f4f4f6"/><rect x="9" y="36" width="9" height="18" fill="#d84a5c"/><rect x="20" y="20" width="10" height="34" fill="#f09a3a"/><rect x="32" y="4" width="11" height="50" fill="#46b457"/><rect x="45" y="14" width="9" height="40" fill="#3f98e6"/></svg></div>
      <div><svg viewBox="0 0 60 60"><path d="M4 2h52l3 25H1z" fill="#38a9e4"/><rect x="14" y="6" width="32" height="16" fill="#eef4f7"/><circle cx="26" cy="14" r="5" fill="#d9705e"/><path d="M28 27h4v28h-4zM18 55h24v4H18z" fill="#d6dadd"/></svg></div>
      <div><svg viewBox="0 0 60 60"><circle cx="30" cy="30" r="29" fill="#f4f4f5"/><path d="M14 14h10l22 32H36L14 24zM40 14h6v14l-6-9zM14 34l7 12h-7z" fill="#e5435c"/></svg></div>
      <div><svg viewBox="0 0 60 60"><circle cx="30" cy="30" r="29" fill="#f5f5f7"/><path d="M24 44V17l19-4v26" fill="none" stroke="#d4568e" stroke-width="4.500"/><circle cx="20" cy="44" r="6" fill="#7f68d8"/><circle cx="39" cy="40" r="6" fill="#4e9cec"/></svg></div>
      <div><svg viewBox="0 0 60 60"><circle cx="30" cy="30" r="29" fill="url(#gPod)"/><circle cx="30" cy="28" r="18" fill="none" stroke="#ecd3f6" stroke-width="3"/><circle cx="30" cy="28" r="10.500" fill="none" stroke="#ecd3f6" stroke-width="3"/><circle cx="30" cy="27" r="5" fill="#fff"/><path d="M26 35h8l-2 17h-4z" fill="#fff"/></svg></div>
      <div><svg viewBox="0 0 60 60"><circle cx="30" cy="30" r="29" fill="#1b1b1c"/><path d="M17 24q5-3 8 1-4 4 0 8-2 5-5 5-7 1-9-7 0-8 6-7zM17 22q0-4 4-5 0 4-4 5z" fill="#fff"/><text x="40" y="38" font-size="22" text-anchor="middle" fill="#fff">tv</text></svg></div>
      <div><svg viewBox="0 0 60 60"><circle cx="29" cy="31" r="28" fill="url(#gBlue)"/><path d="M31 13L17 45M27 13l14 32M12 38h35" stroke="#f2f8fd" stroke-width="5" stroke-linecap="round"/><circle cx="51" cy="10" r="12" fill="#e9513f"/><text x="51" y="15" font-size="14" text-anchor="middle" fill="#fff">2</text></svg></div>
      <div><svg viewBox="0 0 60 60"><circle cx="30" cy="30" r="27" fill="#276489" stroke="#cfdde6" stroke-width="3"/><circle cx="30" cy="31" r="15" fill="none" stroke="#9dc3da" stroke-width="3"/><path d="M30 10v24M7 30h4M49 30h4M14 14l6 6M46 14l-6 6M14 48l6-6M46 48l-6-6" stroke="#9dc3da" stroke-width="3"/></svg></div>
      <div class="on"><svg viewBox="0 0 60 60"><circle cx="33" cy="30" r="26" fill="#e6683d"/><path d="M33 4a26 26 0 0 1 26 26H33z" fill="#f08f68"/><rect x="1" y="17" width="30" height="28" rx="3" fill="#c54420"/><text x="16" y="39" font-size="22" font-weight="700" text-anchor="middle" fill="#fff">P</text></svg></div>
      <div class="on"><svg viewBox="0 0 60 60"><rect x="23" y="5" width="15" height="51" rx="2" fill="#333a42"/></svg></div>
    </div>
    <i class="sep"></i>
    <div class="apps docs">
      <div class="on"><svg viewBox="0 0 60 60"><path d="M10 4h46v36H10z" fill="#c9a77c"/><g transform="rotate(-6 30 30)"><path d="M3 12h46v36H3z" fill="#f0f2f4"/><path d="M6 15h40v18H6z" fill="#8fb3e6"/><path d="M6 33q20-8 40-2v13H6z" fill="#2e4a6e"/></g><circle cx="46" cy="38" r="11" fill="#b4b0a6" stroke="#807c74" stroke-width="3"/><path d="M42 48h10v10H42z" fill="#807c74"/></svg></div>
      <div class="on"><svg viewBox="0 0 60 60"><rect x="14" y="4" width="45" height="52" rx="2" fill="#2e6fc4"/><path d="M14 4h45v13H14z" fill="#4b9be6"/><path d="M14 43h45v13H14z" fill="#1d4b97"/><rect x="1" y="17" width="31" height="28" rx="3" fill="#1c58b5"/><text x="16" y="38" font-size="20" font-weight="700" text-anchor="middle" fill="#fff">W</text></svg></div>
      <div class="on"><svg viewBox="0 0 60 60"><rect x="14" y="4" width="45" height="52" rx="2" fill="#23904f"/><path d="M36 4h23v18H36z" fill="#36b873"/><path d="M14 43h45v13H14z" fill="#176239"/><rect x="1" y="17" width="31" height="28" rx="3" fill="#147340"/><text x="16" y="39" font-size="21" font-weight="700" text-anchor="middle" fill="#fff">X</text></svg></div>
      <div class="on"><svg viewBox="0 0 60 60"><path d="M43 1l15 6v46l-15 6-22-22L6 47l-5-4 13-13L1 17l5-4 15 11zM43 19L28 30l15 11z" fill="#2488cf" fill-rule="evenodd"/></svg></div>
      <div class="on"><svg viewBox="0 0 60 60"><use href="#webex"/></svg></div>
      <div class="on"><svg viewBox="0 0 60 60"><use href="#webex"/><path d="M36 46h14v12H36zM50 50l8-4v12l-8-3z" fill="#3cb5e6"/></svg></div>
    </div>
    <i class="sep"></i>
    <div class="apps bin">
      <div><svg viewBox="0 0 60 60"><rect x="2" y="10" width="56" height="48" fill="#f3f3f5"/><path d="M2 10h56v5H2z" fill="#333"/><rect x="10" y="34" width="18" height="14" fill="#fff" stroke="#ccc"/><path d="M18 36v8" stroke="#b55" stroke-width="3"/></svg></div>
      <div><svg viewBox="0 0 60 60"><path d="M8 8h46l-6 50H15z" fill="#c6c9cc"/><path d="M17 12l4 42M30 12v44M44 12l-4 42" stroke="#d2d5d7" stroke-width="4"/><ellipse cx="31" cy="8" rx="23" ry="5" fill="#8d9194"/><path d="M16 7l8-5 8 4 8-5 7 6" stroke="#e8eaeb" stroke-width="3" fill="none"/></svg></div>
    </div>
  </footer>
</main>
</body>
</html>
```
FILE: styles.css
```css
* { box-sizing: border-box; }
body { margin: 0; background: #3c3c3c; font-family: Inter, "Liberation Sans", sans-serif; }
svg { display: block; flex: none; }
svg text { font-family: Inter, "Liberation Sans", sans-serif; }
.defs { position: absolute; }
.stage { position: relative; width: 3340px; height: 2320px; overflow: hidden; background: #3c3c3c; }

/* Participant strip */
.tiles { display: flex; height: 365px; padding-left: 355px; }
.tile { position: relative; background: #d8d8d8; }
.tile-a { width: 1335px; }
.tile-k { width: 660px; background: #efefef; display: flex; flex-direction: column; align-items: center; padding-top: 62px; }
.tile-b { width: 900px; }
.avatar { width: 161px; height: 161px; border-radius: 50%; background: #fff; color: #ee8478; font: 300 71px/161px Inter, sans-serif; text-align: center; }
.name { width: 622px; height: 91px; margin-top: 51px; padding-left: 37px; background: #606060; color: #fff; font-size: 47px; line-height: 94px; letter-spacing: -1.3px; white-space: nowrap; }
.ghost { position: absolute; border-radius: 50%; background: #d6d6d6; }
.ghost-1 { left: 257px; top: 94px; width: 160px; height: 130px; }
.ghost-2 { left: 850px; top: 50px; width: 180px; height: 205px; }
.ghost-3 { left: 265px; top: 66px; width: 150px; height: 154px; background: #d9d9d9; }
.ghost-4 { left: 740px; top: 240px; width: 370px; height: 125px; border-radius: 180px 180px 0 0; }
.ghost-name { position: absolute; left: 728px; top: 292px; font-size: 46px; letter-spacing: -1.6px; color: #d2d2d2; }

/* Desktop */
.wall { position: absolute; left: 115px; top: 365px; width: 3145px; height: 1955px; background: linear-gradient(#56748f 0, #56748f 600px, #0c2340 640px, #071d3c 100%); }
.menubar { position: absolute; left: 115px; top: 365px; width: 3145px; height: 42px; display: flex; align-items: center; background: linear-gradient(90deg, #cce7f7 0, #c6e3f5 60%, #d5e8f4 85%, #efeff2 100%); border-bottom: 2px solid #8ba6b4; color: #3a5f74; font-size: 26px; letter-spacing: -.3px; white-space: nowrap; }
.menus { display: grid; grid-template-columns: 62px 136px 77px 81px 93px 121px 170px 118px 130px 818px; padding-left: 40px; align-items: center; }
.menus b { font-weight: 600; color: #2a5167; }
.status { display: grid; grid-template-columns: 54px 47px 56px 50px 67px 51px 55px 54px 65px 47px 56px 60px 64px 86px 298px 59px 53px 40px; align-items: center; }
.status .grey { color: #54606a; }
.pct { font-size: 24px; letter-spacing: -1.4px; }
.clock { color: #4a5a66; font-size: 26px; }

/* Presentation windows behind the browser */
.ppt { position: absolute; left: 2700px; background: #efefef; overflow: hidden; }
.ppt-bar { display: flex; align-items: center; justify-content: flex-end; background: #cf8872; color: #fbe4d8; }
.ppt-bar .find { display: flex; align-items: center; justify-content: flex-end; flex: 1; height: 32px; background: #fff; color: #444; font-size: 25px; letter-spacing: -1px; padding-right: 16px; }
.find span { margin-right: auto; padding-left: 60px; }
.ppt-bar svg + svg { margin-left: 31px; }
.ppt-bar svg:last-child { margin-left: 9px; }
.ppt-tabs { display: flex; justify-content: flex-end; gap: 23px; padding: 9px 22px 0 0; height: 50px; }
.pill { display: flex; align-items: center; gap: 9px; width: 120px; height: 41px; padding-left: 15px; background: #fdfdfd; color: #d98b80; font-size: 22px; font-weight: 500; letter-spacing: -.3px; }
.pill-c { width: 174px; }
.ppt-1 { top: 407px; width: 558px; height: 1827px; border-radius: 0 0 12px 0; border-right: 3px solid #d9dde2; }
.ppt-1 .ppt-bar { height: 61px; padding-right: 19px; }
.ppt-1 .ppt-edge { height: 146px; border-bottom: 3px solid #d5d5d5; }
.ppt-1 .ppt-foot { margin-top: 1517px; height: 9px; border-top: 2px solid #c5c5c5; border-bottom: 2px solid #c5c5c5; background: #fafafa; }
.peek { position: absolute; left: 528px; top: 1685px; }
.ppt-2 { top: 536px; width: 528px; height: 1683px; background: #e6e6e6; border-radius: 0 10px 10px 0; border-right: 2px solid #cfcfcf; box-shadow: 0 0 14px rgba(0,0,0,.2); }
.ppt-2 .ppt-bar { height: 59px; padding-right: 19px; }
.ppt-2 .ppt-edge { height: 196px; border-bottom: 3px solid #cfcfcf; background: #ededed; }
.ppt-2 .ppt-foot { margin-top: 1377px; height: 8px; border-bottom: 2px solid #bbb; background: #fafafa; }
.ppt-3 { top: 578px; width: 467px; height: 60px; border-radius: 0 10px 0 0; }
.ppt-3 .ppt-bar { height: 60px; padding-right: 20px; border-top: 2px solid #d99a86; }
.ppt-3 .find, .ppt-4 .find { margin-right: 25px; }
.ppt-4 { top: 622px; width: 507px; height: 1698px; border-radius: 0 10px 0 0; box-shadow: 0 0 16px rgba(0,0,0,.35); display: flex; flex-direction: column; background: #f1f1f1; }
.ppt-4 .ppt-bar { height: 58px; padding-right: 21px; border-top: 2px solid #dd9c88; }
.arrange { display: grid; grid-template-columns: 88px 90px 94px 94px; margin: 22px 0 0 88px; font-size: 20px; line-height: 24px; color: #8b8b8b; text-align: center; letter-spacing: -.2px; white-space: nowrap; }
.arrange svg { margin: 0 auto 11px; }
.canvas { margin-top: 9px; height: 1308px; border-top: 2px solid #dadada; background: #eee; }
.ppt-bottom { flex: 1; border-top: 2px solid #cdcdcd; background: linear-gradient(#e9e9e9, #dcdcdc); }

/* Browser */
.chrome { position: absolute; left: 121px; top: 407px; width: 2640px; height: 1829px; border-radius: 10px; overflow: hidden; background: #fff; display: flex; flex-direction: column; }
.chrome { box-shadow: 0 6px 40px rgba(0,0,0,.4); }
.tabs { height: 79px; display: flex; align-items: flex-end; background: #e0e4e8; flex: none; }
.lights { width: 147px; height: 79px; display: flex; gap: 14px; align-items: center; padding: 4px 0 0 24px; }
.lights i { width: 23px; height: 23px; border-radius: 50%; }
.lights .r { background: #f6665c; } .lights .y { background: #f6bf36; } .lights .g { background: #4cc644; }
.tab { position: relative; width: 194.300px; height: 63px; display: flex; align-items: center; padding-left: 22px; font-size: 22px; color: #5b6066; letter-spacing: -.6px; }
.tab::after { content: ""; position: absolute; right: 0; top: 13px; height: 37px; border-right: 2px solid #a9adb2; }
.tab:nth-child(12)::after { display: none; }
.tab span { width: 80px; margin-left: 15px; overflow: hidden; white-space: nowrap; -webkit-mask-image: linear-gradient(90deg, #000 52px, transparent 76px); mask-image: linear-gradient(90deg, #000 52px, transparent 76px); }
.tab.active span { -webkit-mask-image: none; mask-image: none; }
.cl { color: #666; margin-left: 9px; }
.active { background: #fff; border-radius: 14px 14px 0 0; color: #555; }
.tab.active::before, .tab.active::after { content: ""; position: absolute; bottom: 0; top: auto; width: 14px; height: 14px; border: 0; }
.tab.active::before { left: -14px; background: radial-gradient(circle at 0 0, transparent 13.500px, #fff 14px); }
.tab.active::after { right: -14px; background: radial-gradient(circle at 100% 0, transparent 13.500px, #fff 14px); }
.plus { margin: 0 0 21px 31px; }
.toolbar { height: 68px; display: flex; align-items: center; flex: none; }
.navs { width: 201px; padding-left: 28px; display: grid; grid-template-columns: 59px 59px 30px; align-items: center; }
.omni { width: 2095px; height: 55px; border: 3px solid #bfcbee; border-radius: 28px; display: flex; align-items: center; padding: 0 20px 0 23px; }
.url { margin: 0; padding-left: 20px; flex: 1; font-size: 26px; color: #9b9b9b; letter-spacing: -.6px; }
.url b { font-weight: 400; color: #444; }
.exts { display: grid; grid-template-columns: 62px 59px 57px 25px 74px 10px; padding-left: 24px; align-items: center; }
.exts i { height: 28px; border-left: 2px solid #ddd; }
.marks { height: 62px; padding: 0 0 10px 27px; display: grid; grid-template-columns: 126px 117px 111px 112px 180px 200px 166px 288px 290px 189px 290px 290px 203px 40px; align-items: center; font-size: 22px; color: #666; letter-spacing: -.35px; flex: none; white-space: nowrap; }
.marks div { display: flex; align-items: center; gap: 15px; }
.marks .more { padding-top: 0; font-size: 24px; }

/* Web page */
.page { position: relative; height: 1528px; background: #2b2b2b; font-family: Roboto, "Liberation Sans", sans-serif; padding: 0 92px 0 91px; flex: none; border-top: 2px solid #4a4a4a; }
.cloudbar { height: 82px; background: #161616; color: #c3c3c3; display: grid; grid-template-columns: 73px 192px 60px 187px 153px 131px 123px 192px 733px 347px 84px 75px 62px; padding: 2px 0 0 30px; align-items: center; font-size: 27px; white-space: nowrap; }
.cloudbar > i { height: 42px; border-left: 2px solid #3a3a3a; }
.cloudbar .brand { color: #e4e4e4; font-size: 27px; }
.brand b { font-weight: 600; }
.cloudbar .lt { color: #d0d0d0; }
.search { width: 701px; height: 82px; margin-top: -2px; background: #444; display: flex; align-items: center; justify-content: space-between; padding: 2px 27px 0; color: #989898; letter-spacing: -.2px; }
.search svg { color: #ccc; }
.acct { letter-spacing: -.2px; }
.work { display: flex; height: 1444px; }
.form { width: 1798px; background: #f4f4f4; padding-left: 61px; border-top: 2px solid #ccc; }
.rows { width: 1677px; height: 1319px; overflow: hidden; background: #fff; }
.row { height: 89.860px; display: grid; grid-template-columns: 218px 497px 147px 194px 390px 48px 30px; padding-left: 29px; border-bottom: 3px solid #f0f0f0; align-items: center; font-size: 26px; color: #8b8b8b; letter-spacing: .5px; white-space: nowrap; }
.row.first { height: 10px; align-items: end; }
.row.first .area { height: 8px; }
.row .area { align-self: end; height: 74px; margin-bottom: -2px; background: #f4f4f4; border-bottom: 4px solid #bdbdbd; display: flex; align-items: flex-end; justify-content: flex-end; padding: 0 4px 4px; position: relative; }
.row span { padding-bottom: 1px; }
.row span:nth-child(1), .row span:nth-child(4) { letter-spacing: .9px; }
.row i { grid-column: 7; width: 31px; height: 31px; border: 3px solid #737373; border-radius: 3px; margin-bottom: 2px; }
.side { width: 659px; display: flex; align-items: flex-end; background: #292929; }
.btn { height: 119px; padding: 30px 0 0 32px; font-size: 27px; color: #e8e8e8; letter-spacing: .1px; }
.back { width: 331px; background: #7a7a7a; }
.gen { width: 328px; background: #2670ff; padding-left: 28px; }
.scroll { position: absolute; right: 2px; top: 741px; width: 15px; height: 548px; border-radius: 8px; background: #b2b2b2; }
.made { position: absolute; left: 43px; top: 1399px; width: 313px; height: 84px; border-radius: 42px; background: rgba(255,255,255,.77); box-shadow: 0 6px 24px rgba(0,0,0,.12); display: flex; align-items: center; gap: 14px; padding-left: 37px; font: 24px Inter, sans-serif; letter-spacing: -.5px; color: #4a4a4a; }
.fabs { position: absolute; left: 2305px; top: 1398px; display: flex; gap: 17px; }
.fabs span { width: 86px; height: 86px; border-radius: 50%; background: rgba(255,255,255,.75); display: flex; align-items: center; justify-content: center; }
.downloads { flex: 1; display: flex; align-items: center; background: linear-gradient(#fff 40%, #f0f0f0); border-top: 2px solid #d0d0d0; padding-left: 5px; }
.dl { width: 425.300px; height: 68px; display: grid; grid-template-columns: 51px 289px 20px; align-items: center; padding: 8px 0 0 35px; border-right: 2px solid #dcdcdc; font-size: 25px; letter-spacing: -.4px; color: #555; }
.showall { margin-left: auto; width: 142px; height: 58px; border: 1px solid #eee; border-radius: 6px; text-align: center; line-height: 54px; font-size: 22px; letter-spacing: -.5px; color: #505050; }
.downloads > .cl { margin: 0 24px 0 27px; }
.cursor { position: absolute; left: 1262px; top: 1250px; }

/* Dock */
.dock { position: absolute; left: 171px; top: 2236px; width: 3036px; height: 84px; display: flex; align-items: center; background: linear-gradient(#b4b4b6, #a5a8ae); border-top: 3px solid #8e8e90; }
.apps { display: grid; grid-template-columns: repeat(32, 73.900px); padding-left: 5px; }
.apps > div { display: flex; flex-direction: column; align-items: center; justify-content: center; height: 81px; padding-top: 5px; position: relative; }
.apps svg { width: 60px; height: 60px; overflow: visible; }
.apps .on::after { content: ""; position: absolute; bottom: 0; width: 6px; height: 4px; border-radius: 3px 3px 0 0; background: #3d3f44; }
.sep { width: 2px; height: 64px; background: #85888e; margin-left: 16px; }
.docs { grid-template-columns: repeat(6, 74px); padding-left: 15px; }
.docs + .sep { margin-left: 17px; }
.bin { grid-template-columns: 74px 74px; padding-left: 13px; }
```
